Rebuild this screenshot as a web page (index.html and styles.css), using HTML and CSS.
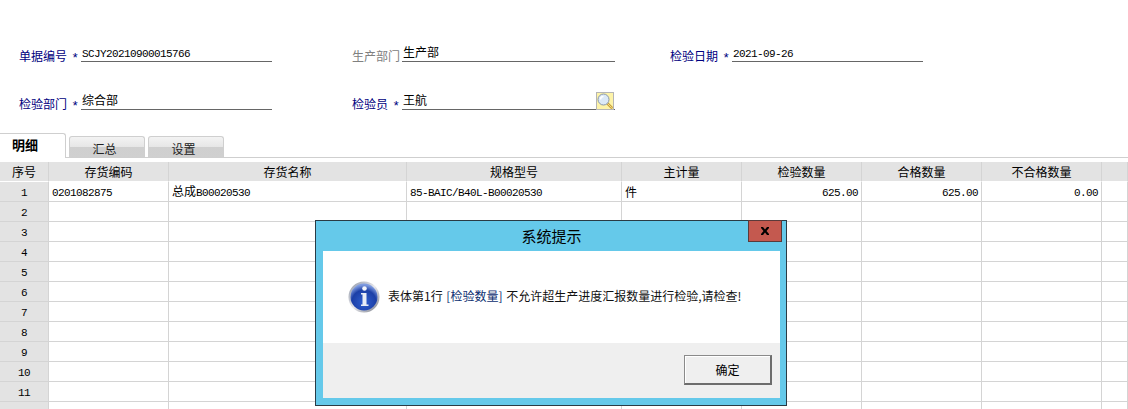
FILE: index.html
```html
<!DOCTYPE html>
<html lang="zh-CN">
<head>
<meta charset="utf-8">
<title>检验单</title>
<link rel="stylesheet" href="styles.css">
</head>
<body>
<main class="page">
  <section class="form">
    <div class="field"><label class="label req lw62">单据编号<i>*</i></label><div class="value"><span class="mono">SCJY20210900015766</span></div></div>
    <div class="field wide"><label class="label muted lw50">生产部门</label><div class="value">生产部</div></div>
    <div class="field"><label class="label req lw62">检验日期<i>*</i></label><div class="value"><span class="mono">2021-09-26</span></div></div>
    <div class="field"><label class="label req lw62">检验部门<i>*</i></label><div class="value">综合部</div></div>
    <div class="field wide"><label class="label req lw50">检验员<i>*</i></label><div class="value">王航
      <button class="lookup" aria-label="查找"><svg width="16" height="16" viewBox="0 0 16 16"><path d="M9.5 9.5l5 5" stroke="#c9a23a" stroke-width="2.6" stroke-linecap="round"/><path d="M9.5 9.5l5 5" stroke="#f2d98a" stroke-width="1" stroke-linecap="round"/><circle cx="6.5" cy="6.500" r="5.500" fill="#dbe9f7" stroke="#8a97a8"/><path d="M3.500 6.500a3 3 0 0 1 3-3" fill="none" stroke="#fff" stroke-width="1.500"/></svg></button></div></div>
  </section>

  <nav class="tabs">
    <a class="tab active">明细</a>
    <a class="tab">汇总</a>
    <a class="tab">设置</a>
  </nav>

  <table class="grid">
    <colgroup><col class="c49"><col class="c120"><col class="c238"><col class="c215"><col class="c120"><col class="c120"><col class="c120"><col class="c120"><col></colgroup>
    <thead><tr><th>序号</th><th>存货编码</th><th>存货名称</th><th>规格型号</th><th>主计量</th><th>检验数量</th><th>合格数量</th><th>不合格数量</th><th></th></tr></thead>
    <tbody>
      <tr><th><span class="mono">1</span></th><td><span class="mono">0201082875</span></td><td>总成<span class="mono">B00020530</span></td><td><span class="mono">85-BAIC/B40L-B00020530</span></td><td>件</td><td class="num"><span class="mono">625.00</span></td><td class="num"><span class="mono">625.00</span></td><td class="num"><span class="mono">0.00</span></td><td></td></tr>
      <tr><th><span class="mono">2</span></th><td></td><td></td><td></td><td></td><td></td><td></td><td></td><td></td></tr>
      <tr><th><span class="mono">3</span></th><td></td><td></td><td></td><td></td><td></td><td></td><td></td><td></td></tr>
      <tr><th><span class="mono">4</span></th><td></td><td></td><td></td><td></td><td></td><td></td><td></td><td></td></tr>
      <tr><th><span class="mono">5</span></th><td></td><td></td><td></td><td></td><td></td><td></td><td></td><td></td></tr>
      <tr><th><span class="mono">6</span></th><td></td><td></td><td></td><td></td><td></td><td></td><td></td><td></td></tr>
      <tr><th><span class="mono">7</span></th><td></td><td></td><td></td><td></td><td></td><td></td><td></td><td></td></tr>
      <tr><th><span class="mono">8</span></th><td></td><td></td><td></td><td></td><td></td><td></td><td></td><td></td></tr>
      <tr><th><span class="mono">9</span></th><td></td><td></td><td></td><td></td><td></td><td></td><td></td><td></td></tr>
      <tr><th><span class="mono">10</span></th><td></td><td></td><td></td><td></td><td></td><td></td><td></td><td></td></tr>
      <tr><th><span class="mono">11</span></th><td></td><td></td><td></td><td></td><td></td><td></td><td></td><td></td></tr>
      <tr><th><span class="mono">12</span></th><td></td><td></td><td></td><td></td><td></td><td></td><td></td><td></td></tr>
    </tbody>
  </table>

  <div class="dialog" role="dialog">
    <header class="dialog-title">系统提示</header>
    <button class="dialog-close" aria-label="关闭"><svg width="10" height="8" viewBox="0 0 10 8"><path d="M1 0h2l2 2.500L7 0h2v1L6.500 4 9 7v1H7L5 5.500 3 8H1V7l2.500-3L1 1z" fill="#000"/></svg></button>
    <div class="dialog-body">
      <svg class="info" width="32" height="32" viewBox="0 0 32 32">
        <defs>
          <radialGradient id="blue" cx="50%" cy="70%" r="65%"><stop offset="0" stop-color="#2f5fd0"/><stop offset="0.7" stop-color="#1c3fa6"/><stop offset="1" stop-color="#7f9be0"/></radialGradient>
          <linearGradient id="ring" x1="0" y1="0" x2="1" y2="1"><stop offset="0" stop-color="#8b93a3"/><stop offset="0.5" stop-color="#e8e8ec"/><stop offset="1" stop-color="#777c88"/></linearGradient>
        </defs>
        <circle cx="16" cy="16" r="15.500" fill="url(#ring)"/>
        <circle cx="16" cy="16" r="13.500" fill="url(#blue)"/>
        <circle cx="16.500" cy="7.500" r="2.300" fill="#f4f6fb"/>
        <path d="M13 12h5.500v11.500H20.500v1.500h-7.500v-1.500h1.500V13.500H13z" fill="#e9edf6"/>
      </svg>
      <p class="message">表体第1行 <span class="hl">[检验数量]</span> 不允许超生产进度汇报数量进行检验,请检查!</p>
    </div>
    <footer class="dialog-foot"><button class="ok">确定</button></footer>
  </div>
</main>
</body>
</html>
```
FILE: styles.css
```css
* { box-sizing: border-box; }
html, body { margin: 0; padding: 0; background: #fff; }
body { font: 12px/1 "Noto Sans CJK SC", "Liberation Sans", sans-serif; color: #000; }
.page { position: relative; width: 1128px; height: 409px; overflow: hidden; }
.mono { font-family: "Liberation Mono", monospace; font-size: 11px; letter-spacing: -0.6px; line-height: 1; }

.form {
  display: grid;
  grid-template-columns: 333px 318px 253px;
  grid-auto-rows: 22px;
  row-gap: 26px;
  padding: 40px 0 0 19px;
}
.field { display: flex; align-items: flex-end; width: 253px; }
.field.wide { width: 263px; }
.label { display: flex; justify-content: space-between; height: 13px; line-height: 13px; flex: none; color: #000080; }
.label i { font-family: "Liberation Mono", monospace; font-size: 13px; line-height: 20px; font-style: normal; padding-right: 2px; }
.lw62 { width: 62px; }
.lw50 { width: 50px; }
.muted { color: #808080; }
.value { position: relative; flex: 1; height: 22px; border-bottom: 1px solid #666; line-height: 19px; padding: 2px 0 0 1px; }
.lookup {
  position: absolute; right: 1px; bottom: -1px; width: 18px; height: 18px; padding: 0;
  display: flex; align-items: center; justify-content: center;
  background: #fdf3a8; border: 1px solid #b5b5b5;
}

.tabs { display: flex; align-items: flex-end; height: 25px; margin-top: 23px; border-bottom: 1px solid #cfcfcf; gap: 3px; }
.tab {
  width: 76px; height: 21px; padding-right: 5px; text-align: center; line-height: 24px; color: #222;
  border: 1px solid #cfcfcf; border-bottom: 0; border-radius: 3px 3px 0 0;
  background: linear-gradient(#f3f3f3, #e6e6e6 50%, #cfcfcf 52%, #d0d0d0);
}
.tab.active {
  width: 66px; height: 25px; margin-bottom: -1px; font-size: 13px; font-weight: 700; text-align: left;
  padding: 0 0 0 12px; line-height: 22px; color: #000; background: #fff; border-left: 0;
  border-radius: 0 3px 0 0;
}

.grid { table-layout: fixed; width: 1128px; margin-top: 4px; border-collapse: separate; border-spacing: 0; }
.c49 { width: 49px; }
.c120 { width: 120px; }
.c238 { width: 238px; }
.c215 { width: 215px; }
.grid th, .grid td {
  height: 20px; padding: 0 3px; font-weight: 400; line-height: 14px; white-space: nowrap; overflow: hidden;
  border-right: 1px solid #d4d4d4; border-bottom: 1px solid #d4d4d4;
}
.grid th { background: #e3e3e3; text-align: center; }
.grid thead th { border-bottom-color: #fff; }
.grid .num { text-align: right; }

.dialog {
  position: absolute; left: 315px; top: 220px; width: 472px; height: 186px;
  display: flex; flex-direction: column; padding: 0 6px 7px 7px;
  background: #65c9ea; border: 1px solid #2a3b45;
}
.dialog-title { height: 30px; flex: none; text-align: center; font-size: 15px; line-height: 30px; }
.dialog-close {
  position: absolute; top: -1px; right: 4px; width: 34px; height: 22px; padding: 0;
  display: flex; align-items: center; justify-content: center;
  background: #c4594f; border: 1px solid #5a3a3a;
}
.dialog-body { flex: none; height: 92px; background: #fff; display: flex; align-items: center; gap: 8px; padding: 0 0 0 25px; }
.info { flex: none; }
.message { margin: 0 0 2px; line-height: 16px; color: #111; word-spacing: 1px; }
.hl { color: #0b2e6f; }
.dialog-foot { flex: 1; background: #efefef; display: flex; justify-content: flex-end; align-items: flex-start; padding: 12px 8px 0 0; }
.ok {
  width: 88px; height: 30px; padding: 0; font: inherit; color: #000; background: #efefef;
  border: 2px solid #6d6d6d; border-top: 1px solid #8a8a8a; border-left: 1px solid #8a8a8a;
  box-shadow: inset 1px 1px 0 #fff;
}
```
